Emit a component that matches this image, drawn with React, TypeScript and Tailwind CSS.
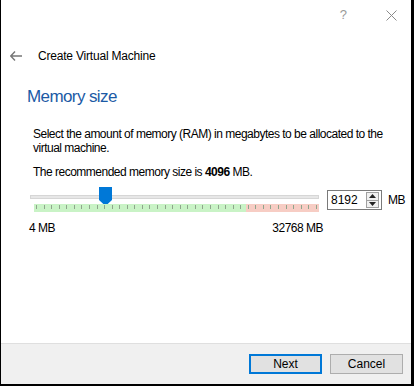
import React from "react";

const font = { fontFamily: '"Liberation Sans", Arial, sans-serif' };

function Ticks() {
  const n = 38;
  return (
    <div className="relative h-[8px] w-[285px] ml-[4px] flex">
      <div className="h-full w-[212px] bg-[#c9f3c6]" />
      <div className="h-full flex-1 bg-[#f7cdc4]" />
      <div className="absolute inset-0 flex justify-between px-[2px]">
        {Array.from({ length: n }).map((_, i) => (
          <div key={i} className="w-px h-[4px] mt-[1px] bg-[#8fa58c]" />
        ))}
      </div>
    </div>
  );
}

function Slider() {
  return (
    <div className="w-[295px]">
      <div className="relative h-[14px] flex items-center">
        <div className="h-[4px] w-full bg-[#e7e7e7] border border-[#d6d6d6]" />
        <svg
          className="absolute left-[69px] top-[-3px]"
          width="13"
          height="19"
          viewBox="0 0 13 19"
        >
          <path d="M0 0 H13 V13 L6.5 19 L0 13 Z" fill="#0078d7" />
        </svg>
      </div>
      <Ticks />
    </div>
  );
}

function SpinBox() {
  return (
    <div className="flex items-center h-[20px] w-[55px] border border-[#7a7a7a] bg-white">
      <span className="flex-1 pl-[3px] text-[12px] text-black leading-none">8192</span>
      <div className="w-[13px] h-[16px] mr-[2px] border border-[#a0a0a0] bg-[#f0f0f0] flex flex-col">
        <div className="flex-1 flex items-center justify-center border-b border-[#a0a0a0]">
          <svg width="7" height="4" viewBox="0 0 7 4">
            <path d="M0 4 L3.5 0 L7 4 Z" fill="#222" />
          </svg>
        </div>
        <div className="flex-1 flex items-center justify-center">
          <svg width="7" height="4" viewBox="0 0 7 4">
            <path d="M0 0 L3.5 4 L7 0 Z" fill="#222" />
          </svg>
        </div>
      </div>
    </div>
  );
}

export default function App() {
  return (
    <div
      className="w-[414px] h-[386px] bg-white border-l border-r-[3px] border-b-2 border-black flex flex-col text-black"
      style={font}
    >
      <div className="h-[30px] shrink-0 flex items-center justify-end pr-[14px] gap-[39px] text-[#9a9a9a]">
        <span className="text-[13px]">?</span>
        <svg width="11" height="11" viewBox="0 0 11 11">
          <path d="M0.5 0.5 L10.5 10.5 M10.5 0.5 L0.5 10.5" stroke="#8a8a8a" strokeWidth="1" />
        </svg>
      </div>
      <div className="h-[50px] shrink-0 flex items-center pl-[9px] pt-[1px]">
        <svg width="12" height="10" viewBox="0 0 12 10" className="mr-[16px]">
          <path d="M5 0.5 L0.8 5 L5 9.5 M0.8 5 H12" stroke="#777" strokeWidth="1.4" fill="none" />
        </svg>
        <span className="text-[12px] tracking-[-0.2px]">Create Virtual Machine</span>
      </div>
      <div className="flex-1 pl-[26px] pr-[10px]">
        <div className="text-[17px] tracking-[-0.6px] text-[#1b5aa5] leading-none mt-[8px]">Memory size</div>
        <p className="text-[12px] tracking-[-0.5px] leading-[14px] mt-[22px] ml-[6px]">
          Select the amount of memory (RAM) in megabytes to be allocated to the
          virtual machine.
        </p>
        <p className="text-[12px] tracking-[-0.5px] leading-[14px] mt-[10px] ml-[6px]">
          The recommended memory size is <b>4096</b> MB.
        </p>
        <div className="flex items-start mt-[11px] ml-[3px]">
          <Slider />
          <div className="ml-[8px] flex items-center">
            <SpinBox />
            <span className="ml-[6px] text-[12px] tracking-[-0.5px]">MB</span>
          </div>
        </div>
        <div className="w-[294px] ml-[2px] mt-[7px] flex justify-between text-[12px] tracking-[-0.5px]">
          <span>4 MB</span>
          <span>32768 MB</span>
        </div>
      </div>
      <div className="h-[41px] shrink-0 bg-[#f0f0f0] border-t border-[#dfdfdf] flex items-center justify-end pr-[8px] gap-[8px]">
        <button className="w-[73px] h-[20px] bg-[#e1e1e1] border-2 border-[#0078d7] text-[12px] leading-none">
          Next
        </button>
        <button className="w-[73px] h-[20px] bg-[#e1e1e1] border border-[#adadad] text-[12px] leading-none">
          Cancel
        </button>
      </div>
    </div>
  );
}
